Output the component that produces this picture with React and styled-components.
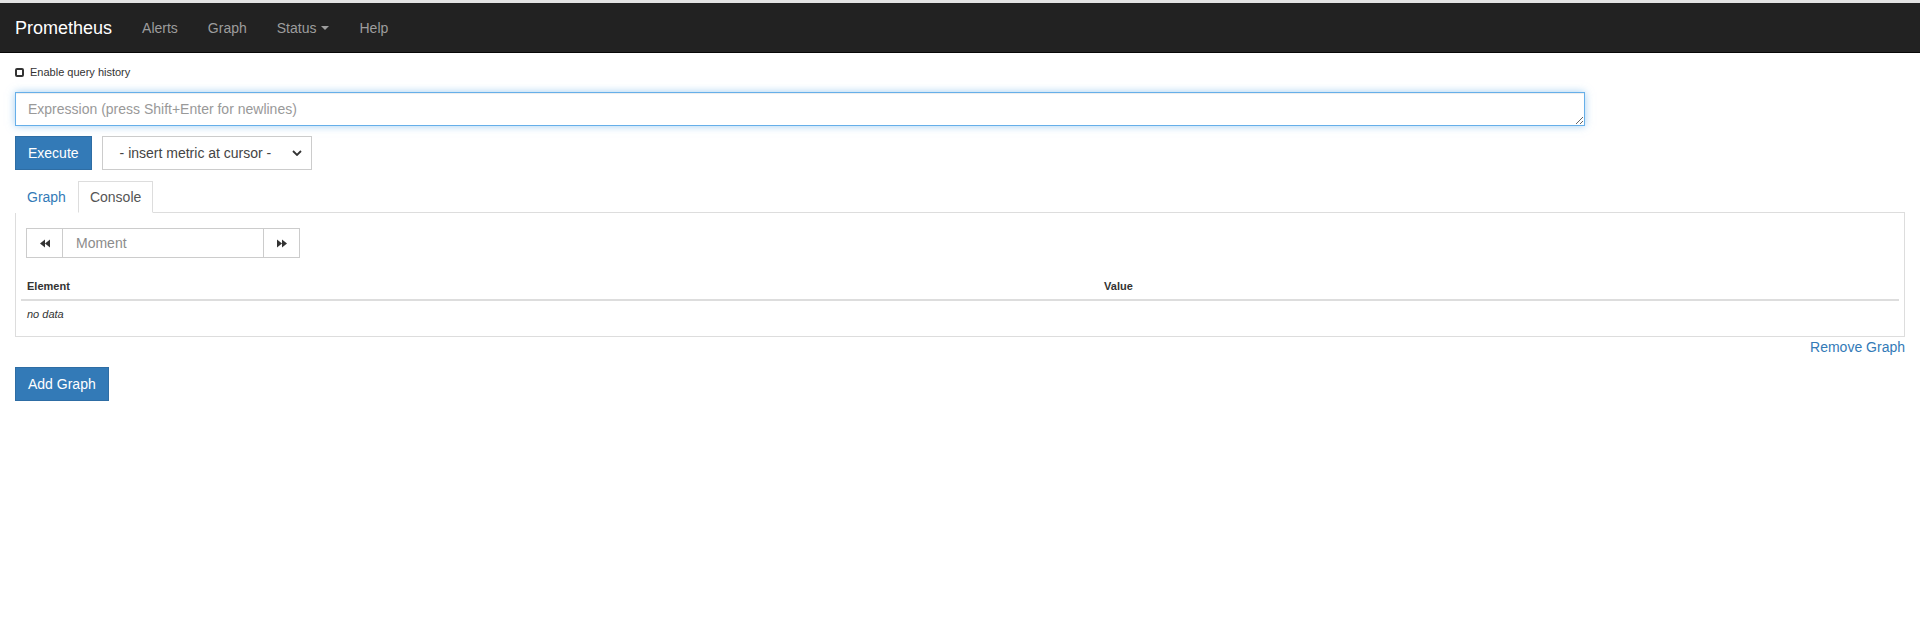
import React from "react";
import styled, { createGlobalStyle } from "styled-components";

const GlobalStyle = createGlobalStyle`
  * {
    box-sizing: border-box;
  }
  body {
    margin: 0;
    background: #ffffff;
    color: #333333;
    font-family: "Liberation Sans", Arial, sans-serif;
    font-size: 14px;
    line-height: 20px;
  }
`;

const BackIcon = () => (
  <svg width="10" height="9" viewBox="0 0 10 9">
    <path d="M0 4.5 L5 0.5 V8.5 Z M5 4.5 L10 0.5 V8.5 Z" fill="#333" />
  </svg>
);

const ForwardIcon = () => (
  <svg width="10" height="9" viewBox="0 0 10 9">
    <path d="M10 4.5 L5 0.5 V8.5 Z M5 4.5 L0 0.5 V8.5 Z" fill="#333" />
  </svg>
);

const Chevron = () => (
  <svg width="10" height="6" viewBox="0 0 10 6">
    <path d="M1 1 L5 5 L9 1" fill="none" stroke="#333" strokeWidth="1.8" />
  </svg>
);

const App = () => {
  return (
    <>
      <GlobalStyle />
      <Navbar>
        <Brand>Prometheus</Brand>
        <NavLinks>
          <NavLink>Alerts</NavLink>
          <NavLink>Graph</NavLink>
          <NavLink>
            Status <Caret />
          </NavLink>
          <NavLink>Help</NavLink>
        </NavLinks>
      </Navbar>

      <Page>
        <HistoryToggle>
          <CheckBox />
          Enable query history
        </HistoryToggle>

        <Expression rows={1} placeholder="Expression (press Shift+Enter for newlines)" />

        <ActionRow>
          <PrimaryButton>Execute</PrimaryButton>
          <MetricSelect>
            <span>- insert metric at cursor -</span>
            <Chevron />
          </MetricSelect>
        </ActionRow>

        <TabList>
          <Tab>Graph</Tab>
          <Tab active>Console</Tab>
        </TabList>

        <TabPanel>
          <MomentGroup>
            <StepButton><BackIcon /></StepButton>
            <MomentInput placeholder="Moment" />
            <StepButton><ForwardIcon /></StepButton>
          </MomentGroup>

          <ResultTable>
            <thead>
              <tr>
                <HeadCell style={{ width: "57.35%" }}>Element</HeadCell>
                <HeadCell>Value</HeadCell>
              </tr>
            </thead>
            <tbody>
              <tr>
                <EmptyCell colSpan={2}>no data</EmptyCell>
              </tr>
            </tbody>
          </ResultTable>
        </TabPanel>

        <RemoveRow>
          <TextLink>Remove Graph</TextLink>
        </RemoveRow>

        <PrimaryButton spaced>Add Graph</PrimaryButton>
      </Page>
    </>
  );
};

const Navbar = styled.nav`
  display: flex;
  align-items: center;
  height: 53px;
  border-top: 3px solid #e3e3e3;
  border-bottom: 1px solid #080808;
  background: #222222;
`;

const Brand = styled.a`
  padding: 0 15px;
  color: #ffffff;
  font-size: 18px;
  line-height: 20px;
`;

const NavLinks = styled.div`
  display: flex;
`;

const NavLink = styled.a`
  display: flex;
  align-items: center;
  padding: 0 15px;
  color: #9d9d9d;
  font-size: 14px;
`;

const Caret = styled.span`
  display: inline-block;
  width: 0;
  height: 0;
  margin-left: 5px;
  border-top: 4px solid #9d9d9d;
  border-left: 4px solid transparent;
  border-right: 4px solid transparent;
`;

const Page = styled.main`
  display: flex;
  flex-direction: column;
  align-items: flex-start;
  padding: 0 15px;
`;

const HistoryToggle = styled.label`
  display: flex;
  align-items: center;
  gap: 6px;
  margin-top: 12px;
  font-size: 11px;
  line-height: 15px;
  color: #333;
`;

const CheckBox = styled.span`
  width: 9px;
  height: 9px;
  border: 2px solid #333;
  border-radius: 2px;
  background: #fff;
`;

const Expression = styled.textarea`
  display: block;
  width: 1570px;
  height: 34px;
  margin-top: 12px;
  padding: 6px 12px;
  border: 1px solid #66afe9;
  border-radius: 0;
  outline: none;
  box-shadow: inset 0 1px 1px rgba(0, 0, 0, 0.075), 0 0 8px rgba(102, 175, 233, 0.6);
  font-family: inherit;
  font-size: 14px;
  line-height: 20px;
  color: #555;
  resize: both;

  &::placeholder {
    color: #999;
  }
`;

const ActionRow = styled.div`
  display: flex;
  gap: 10px;
  margin-top: 10px;
`;

const PrimaryButton = styled.button`
  height: 34px;
  padding: 6px 12px;
  margin-top: ${(p) => (p.spaced ? "10px" : "0")};
  border: 1px solid #2e6da4;
  border-radius: 0;
  background: #337ab7;
  color: #ffffff;
  font-family: inherit;
  font-size: 14px;
  line-height: 20px;
`;

const MetricSelect = styled.div`
  display: flex;
  align-items: center;
  justify-content: space-between;
  width: 210px;
  height: 34px;
  padding: 0 9px 0 17px;
  border: 1px solid #ccc;
  background: #fff;
  color: #444;
  font-size: 14px;
`;

const TabList = styled.div`
  display: flex;
  width: 100%;
  margin-top: 11px;
  border-bottom: 1px solid #ddd;
`;

const Tab = styled.a`
  padding: 5px 11px;
  margin-bottom: -1px;
  border: 1px solid ${(p) => (p.active ? "#ddd" : "transparent")};
  border-bottom-color: ${(p) => (p.active ? "#fff" : "transparent")};
  background: #fff;
  color: ${(p) => (p.active ? "#555" : "#337ab7")};
  font-size: 14px;
  line-height: 20px;
`;

const TabPanel = styled.section`
  width: 100%;
  padding: 15px 5px 8px;
  border: 1px solid #ddd;
  border-top: none;
`;

const MomentGroup = styled.div`
  display: flex;
  margin-left: 5px;
  height: 30px;
`;

const StepButton = styled.button`
  display: flex;
  align-items: center;
  justify-content: center;
  width: 37px;
  height: 30px;
  padding: 0;
  border: 1px solid #ccc;
  background: #fff;
`;

const MomentInput = styled.input`
  width: 202px;
  height: 30px;
  padding: 5px 13px;
  margin: 0 -1px;
  border: 1px solid #ccc;
  outline: none;
  font-family: inherit;
  font-size: 14px;
  color: #555;

  &::placeholder {
    color: #8c8c8c;
  }
`;

const ResultTable = styled.table`
  width: 100%;
  margin-top: 12px;
  border-collapse: collapse;
  font-size: 11px;
  line-height: 15px;
`;

const HeadCell = styled.th`
  padding: 9px 6px 5px;
  border-bottom: 2px solid #ddd;
  text-align: left;
  font-weight: bold;
  color: #333;
`;

const EmptyCell = styled.td`
  padding: 6px;
  font-style: italic;
  color: #333;
`;

const RemoveRow = styled.div`
  display: flex;
  justify-content: flex-end;
  width: 100%;
`;

const TextLink = styled.a`
  color: #337ab7;
  font-size: 14px;
  line-height: 20px;
`;

export default App;
